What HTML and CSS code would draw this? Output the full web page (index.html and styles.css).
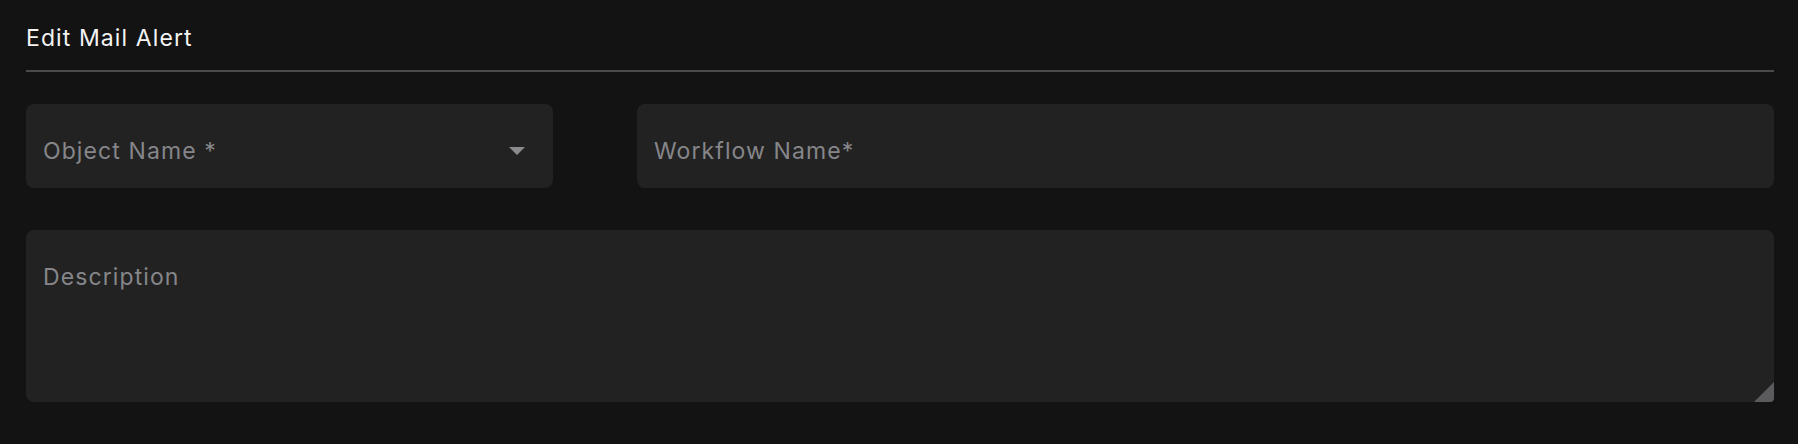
FILE: index.html
```html
<!DOCTYPE html>
<html lang="en">
<head>
    <meta charset="utf-8">
    <title>Edit Mail Alert</title>
    <link rel="stylesheet" href="styles.css">
</head>
<body>
<div class="panel">
    <h2 class="panel-title">Edit Mail Alert</h2>
    <div class="row">
        <div class="field select-field">
            <span class="placeholder">Object Name *</span>
            <svg class="caret" width="16" height="8" viewBox="0 0 16 8"><path d="M0 0h16L8 8z" fill="#8b8b8e"/></svg>
        </div>
        <div class="field wide-field">
            <span class="placeholder">Workflow Name*</span>
        </div>
    </div>
    <div class="field area-field">
        <span class="placeholder">Description</span>
        <span class="grip"></span>
    </div>
</div>
</body>
</html>
```

FILE: styles.css
```css
html, body{
    margin: 0;
    padding: 0;
    background: #131313;
}
body{
    font-family: Inter, "Noto Sans", sans-serif;
}
.panel{
    padding: 0 24px 0 26px;
}
.panel-title{
    margin: 0;
    padding-top: 23px;
    height: 72px;
    box-sizing: border-box;
    font-size: 23px;
    font-weight: 400;
    letter-spacing: 1.1px;
    line-height: 30px;
    color: #f4f4f4;
    border-bottom: 2px solid #4a4a4c;
}
.row{
    display: flex;
    gap: 84px;
    margin-top: 32px;
}
.field{
    background: #222222;
    border-radius: 8px;
    box-sizing: border-box;
}
.placeholder{
    font-size: 23px;
    letter-spacing: 1.1px;
    color: #86868a;
}
.select-field{
    width: 527px;
    height: 84px;
    display: flex;
    align-items: center;
    justify-content: space-between;
    padding: 9px 28px 0 17px;
}
.caret{
    margin-top: 1px;
}
.wide-field{
    flex: 1;
    height: 84px;
    display: flex;
    align-items: center;
    padding: 9px 17px 0;
}
.area-field{
    position: relative;
    margin-top: 42px;
    height: 172px;
    padding: 33px 17px;
}
.grip{
    position: absolute;
    right: 0;
    bottom: 0;
    width: 0;
    height: 0;
    border-left: 20px solid transparent;
    border-bottom: 20px solid #5b5b5d;
    border-bottom-right-radius: 4px;
}
```
